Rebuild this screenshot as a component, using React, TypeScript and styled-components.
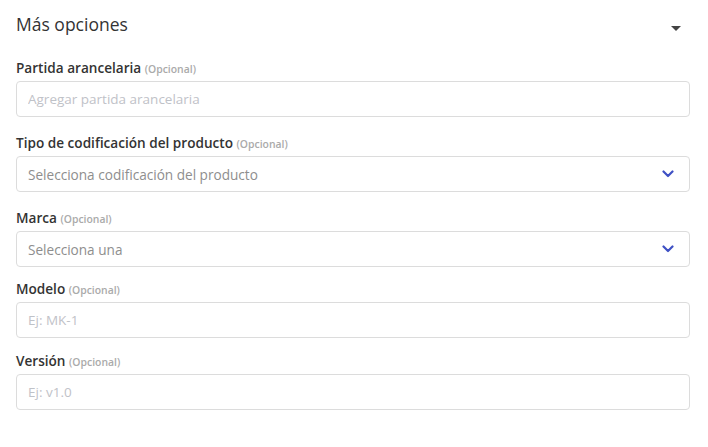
import React from 'react'
import styled, { createGlobalStyle } from 'styled-components'

const GlobalStyle = createGlobalStyle`
  body {
    margin: 0;
    background: #ffffff;
    font-family: 'Open Sans', 'Noto Sans', sans-serif;
  }
`

type FieldSpec = {
  label: string
  placeholder: string
  kind: 'input' | 'select'
  gap: number
}

const fields: FieldSpec[] = [
  { label: 'Partida arancelaria', placeholder: 'Agregar partida arancelaria', kind: 'input', gap: 17 },
  { label: 'Tipo de codificación del producto', placeholder: 'Selecciona codificación del producto', kind: 'select', gap: 17 },
  { label: 'Marca', placeholder: 'Selecciona una', kind: 'select', gap: 13 },
  { label: 'Modelo', placeholder: 'Ej: MK-1', kind: 'input', gap: 14 },
  { label: 'Versión', placeholder: 'Ej: v1.0', kind: 'input', gap: 0 },
]

const Chevron = () => (
  <svg width="12" height="8" viewBox="0 0 12 8" fill="none">
    <path d="M1.5 1.5L6 6L10.5 1.5" stroke="#3f51c4" strokeWidth="2.2" strokeLinecap="round" strokeLinejoin="round" />
  </svg>
)

const App = () => {
  return (
    <>
      <GlobalStyle />
      <Panel>
        <Header>
          <Title>Más opciones</Title>
          <Caret />
        </Header>
        {fields.map((f) => (
          <Field key={f.label} gap={f.gap}>
            <Label>
              {f.label} <Optional>(Opcional)</Optional>
            </Label>
            {f.kind === 'input' ? (
              <TextInput placeholder={f.placeholder} />
            ) : (
              <SelectBox>
                <SelectText>{f.placeholder}</SelectText>
                <Chevron />
              </SelectBox>
            )}
          </Field>
        ))}
      </Panel>
    </>
  )
}

const Panel = styled.div`
  display: flex;
  flex-direction: column;
  padding: 11px 18px 0 16px;
`

const Header = styled.div`
  display: flex;
  justify-content: space-between;
  align-items: center;
  height: 26px;
  margin-bottom: 22px;
  padding-right: 9px;
`

const Title = styled.h2`
  margin: 0;
  font-size: 17.5px;
  font-weight: 500;
  color: #333333;
  line-height: 26px;
`

const Caret = styled.span`
  width: 0;
  height: 0;
  margin-top: 8px;
  border-left: 5px solid transparent;
  border-right: 5px solid transparent;
  border-top: 5px solid #444444;
`

const Field = styled.div<{ gap: number }>`
  display: flex;
  flex-direction: column;
  margin-bottom: ${({ gap }) => gap}px;
`

const Label = styled.label`
  font-size: 13.6px;
  font-weight: 600;
  color: #333333;
  line-height: 18px;
  margin-bottom: 3px;
`

const Optional = styled.span`
  font-size: 10.4px;
  font-weight: 600;
  color: #aaaaaa;
`

const TextInput = styled.input`
  box-sizing: border-box;
  width: 100%;
  height: 36px;
  padding: 0 11px;
  border: 1px solid #dcdcdc;
  border-radius: 4px;
  font-family: inherit;
  font-size: 13.5px;
  color: #333333;
  outline: none;
  &::placeholder {
    color: #bfc2c8;
  }
`

const SelectBox = styled.div`
  box-sizing: border-box;
  display: flex;
  align-items: center;
  justify-content: space-between;
  height: 36px;
  padding: 0 15px 0 11px;
  border: 1px solid #dcdcdc;
  border-radius: 4px;
  cursor: pointer;
`

const SelectText = styled.span`
  font-size: 13.6px;
  color: #8e8e8e;
`

export default App
